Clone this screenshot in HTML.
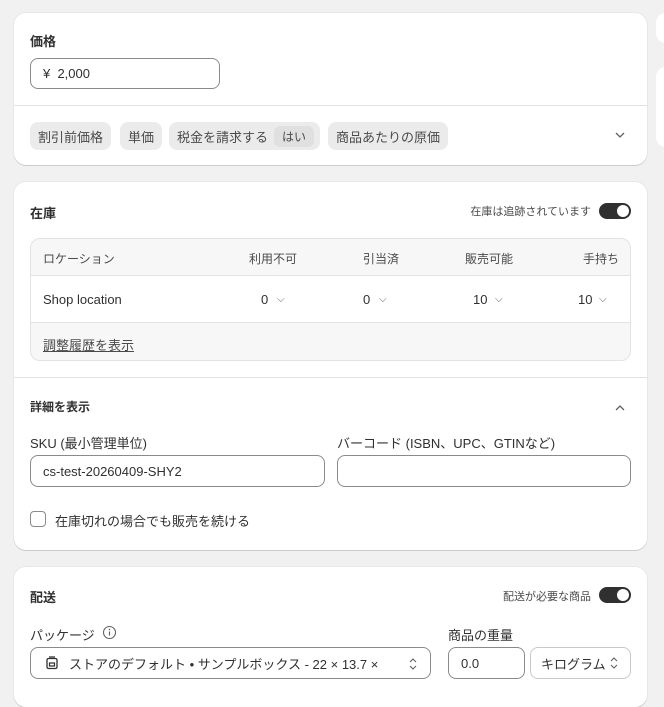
<!DOCTYPE html>
<html><head><meta charset="utf-8"><style>
*{box-sizing:border-box;margin:0;padding:0}
body{width:664px;height:693px;overflow:hidden;background:#f1f1f1;font-family:"Liberation Sans","Noto Sans CJK JP",sans-serif;font-size:13px;color:#303030;position:relative}
.card{position:absolute;left:14px;width:633px;background:#fff;border-radius:12px;box-shadow:0 1px 0 rgba(0,0,0,.12),0 0 0 1px rgba(0,0,0,.04)}
.abs{position:absolute;white-space:nowrap}
.b{font-weight:bold}
.inp{position:absolute;border:1px solid #8a8a8a;border-radius:8px;background:#fff;height:32px;display:flex;align-items:center;padding-left:12px;white-space:nowrap}
.chip{position:absolute;top:109px;height:28px;background:#ebebeb;border-radius:8px;display:flex;align-items:center;padding:0 8px;color:#4a4a4a;white-space:nowrap}
.tog{position:absolute;width:32px;height:16px;border-radius:8px;background:#303030}
.tog:after{content:"";position:absolute;right:2px;top:2px;width:12px;height:12px;border-radius:50%;background:#fff}
.sm{font-size:12px;color:#4a4a4a}
.hr{position:absolute;left:0;right:0;height:1px;background:#e3e3e3}
.cv{position:absolute;font-size:10px;color:#616161}
</style></head><body>
<div class="abs" style="left:656px;top:13px;width:20px;height:30px;background:#fff;border-radius:10px"></div>
<div class="abs" style="left:656px;top:67px;width:20px;height:80px;background:#fff;border-radius:10px"></div>

<div class="card" style="top:13px;height:152px">
 <div class="abs b" style="left:16px;top:18px">価格</div>
 <div class="inp" style="left:16px;top:45px;width:190px;height:31px">¥&nbsp; 2,000</div>
 <div class="hr" style="top:92px"></div>
 <div class="chip" style="left:16px">割引前価格</div>
 <div class="chip" style="left:106px">単価</div>
 <div class="chip" style="left:155px;width:151px">税金を請求する<span style="background:#e0e0e0;border-radius:6px;padding:2px 8px;margin-left:6px;font-size:12px">はい</span></div>
 <div class="chip" style="left:314px">商品あたりの原価</div>
 <svg class="abs" style="left:600px;top:117px" width="12" height="10"><path d="M2 3l4 4 4-4" fill="none" stroke="#616161" stroke-width="1.3"/></svg>
</div>

<div class="card" style="top:182px;height:368px">
 <div class="abs b" style="left:16px;top:21px">在庫</div>
 <div class="abs sm" style="right:56px;top:21px;font-size:11px">在庫は追跡されています</div>
 <div class="tog" style="left:585px;top:21px"></div>
 <div class="abs" style="left:16px;top:56px;width:601px;height:123px;border:1px solid #e3e3e3;border-radius:10px;overflow:hidden;background:#f7f7f7">
  <div class="abs" style="left:0;right:0;top:36px;height:48px;background:#fff;border-top:1px solid #e3e3e3;border-bottom:1px solid #e3e3e3"></div>
  <div class="abs sm" style="left:12px;top:11px">ロケーション</div>
  <div class="abs sm" style="left:218px;top:11px">利用不可</div>
  <div class="abs sm" style="left:332px;top:11px">引当済</div>
  <div class="abs sm" style="left:434px;top:11px">販売可能</div>
  <div class="abs sm" style="left:552px;top:11px">手持ち</div>
  <div class="abs" style="left:12px;top:53px">Shop location</div>
  <div class="abs" style="left:230px;top:53px">0</div><div class="cv" style="left:246px;top:55px">⌵</div>
  <div class="abs" style="left:332px;top:53px">0</div><div class="cv" style="left:348px;top:55px">⌵</div>
  <div class="abs" style="left:442px;top:53px">10</div><div class="cv" style="left:464px;top:55px">⌵</div>
  <div class="abs" style="left:547px;top:53px">10</div><div class="cv" style="left:568px;top:55px">⌵</div>
  <div class="abs" style="left:12px;top:96px;text-decoration:underline;color:#4a4a4a">調整履歴を表示</div>
 </div>
 <div class="hr" style="top:195px"></div>
 <div class="abs b" style="left:16px;top:216px;font-size:12px">詳細を表示</div>
 <svg class="abs" style="left:600px;top:221px" width="12" height="10"><path d="M2 7l4-4 4 4" fill="none" stroke="#616161" stroke-width="1.3"/></svg>
 <div class="abs" style="left:16px;top:251px">SKU (最小管理単位)</div>
 <div class="abs" style="left:323px;top:251px">バーコード (ISBN、UPC、GTINなど)</div>
 <div class="inp" style="left:16px;top:273px;width:295px">cs-test-20260409-SHY2</div>
 <div class="inp" style="left:323px;top:273px;width:294px"></div>
 <div class="abs" style="left:16px;top:329px;width:16px;height:16px;border:1px solid #8a8a8a;border-radius:4px"></div>
 <div class="abs" style="left:41px;top:329px">在庫切れの場合でも販売を続ける</div>
</div>

<div class="card" style="top:567px;height:140px">
 <div class="abs b" style="left:16px;top:20px">配送</div>
 <div class="abs sm" style="right:56px;top:21px;font-size:11px">配送が必要な商品</div>
 <div class="tog" style="left:585px;top:20px"></div>
 <div class="abs" style="left:16px;top:58px">パッケージ</div>
 <svg class="abs" style="left:88px;top:58px" width="15" height="15"><circle cx="7.5" cy="7.5" r="6" fill="none" stroke="#616161" stroke-width="1.1"/><path d="M7.5 6.5v4" stroke="#616161" stroke-width="1.2"/><circle cx="7.5" cy="4.5" r=".8" fill="#616161"/></svg>
 <div class="abs" style="left:434px;top:58px">商品の重量</div>
 <div class="inp" style="left:16px;top:80px;width:401px">
  <svg width="14" height="14" style="margin-right:10px;margin-left:2px"><rect x="2" y="2.5" width="10" height="10" rx="1.5" fill="none" stroke="#303030" stroke-width="1.3"/><path d="M4 1h6M4.5 7h5v3h-5z" fill="none" stroke="#303030" stroke-width="1.2"/></svg>
  <span>ストアのデフォルト • サンプルボックス - 22 × 13.7 ×</span>
  <svg class="abs" style="right:12px;top:9px" width="10" height="14"><path d="M2 5l3-3 3 3M2 9l3 3 3-3" fill="none" stroke="#616161" stroke-width="1.1"/></svg>
 </div>
 <div class="inp" style="left:434px;top:80px;width:77px">0.0</div>
 <div class="inp" style="left:516px;top:80px;width:101px;border-color:#c9c9c9;padding-left:10px">キログラム<svg width="10" height="14" style="margin-left:3px"><path d="M2 5l3-3 3 3M2 9l3 3 3-3" fill="none" stroke="#616161" stroke-width="1.1"/></svg></div>
</div>
</body></html>
